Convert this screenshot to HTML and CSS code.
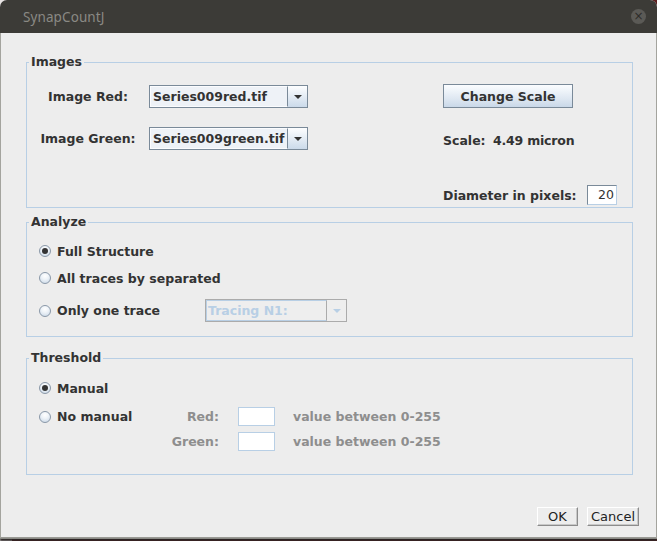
FILE: index.html
```html
<!DOCTYPE html>
<html>
<head>
<meta charset="utf-8">
<link rel="stylesheet" href="styles.css">
</head>
<body>
<div class="window">
  <div class="titlebar">
    <span class="title">SynapCountJ</span>
    <span class="close">×</span>
  </div>
  <div class="content">
    <fieldset class="group images">
      <legend>Images</legend>
      <div class="img-row r1">
        <span class="img-label">Image Red:</span>
        <div class="combo"><span class="combo-text">Series009red.tif</span><span class="combo-arrow"><span class="tri"></span></span></div>
        <button class="scale-btn">Change Scale</button>
      </div>
      <div class="img-row r2">
        <span class="img-label">Image Green:</span>
        <div class="combo"><span class="combo-text">Series009green.tif</span><span class="combo-arrow"><span class="tri"></span></span></div>
        <div class="scale-info"><span class="scale-key">Scale:</span><span class="scale-val">4.49 micron</span></div>
      </div>
      <div class="img-row r3">
        <span class="diam-label">Diameter in pixels:</span>
        <span class="diam-input">20</span>
      </div>
    </fieldset>

    <fieldset class="group analyze">
      <legend>Analyze</legend>
      <div class="radio-row a1">
        <span class="radio on"></span><span class="radio-label">Full Structure</span>
      </div>
      <div class="radio-row a2">
        <span class="radio"></span><span class="radio-label">All traces by separated</span>
      </div>
      <div class="radio-row a3">
        <span class="radio"></span><span class="radio-label wide">Only one trace</span>
        <div class="combo disabled"><span class="combo-text">Tracing N1:</span><span class="combo-arrow"><span class="tri"></span></span></div>
      </div>
    </fieldset>

    <fieldset class="group threshold">
      <legend>Threshold</legend>
      <div class="radio-row t1">
        <span class="radio on"></span><span class="radio-label">Manual</span>
      </div>
      <div class="radio-row t2">
        <span class="radio"></span><span class="radio-label tlabel">No manual</span>
        <span class="val-label">Red:</span>
        <span class="val-input"></span>
        <span class="val-hint">value between 0-255</span>
      </div>
      <div class="radio-row t3">
        <span class="val-spacer"></span>
        <span class="val-label">Green:</span>
        <span class="val-input"></span>
        <span class="val-hint">value between 0-255</span>
      </div>
    </fieldset>

    <div class="buttons">
      <button class="btn">OK</button>
      <button class="btn">Cancel</button>
    </div>
  </div>
</div>
</body>
</html>
```

FILE: styles.css
```css
html, body {
  margin: 0;
  padding: 0;
}
body {
  width: 657px;
  height: 541px;
  overflow: hidden;
  background: linear-gradient(90deg, #e8e4e4 0, #e8e4e4 12px, #5a1f1f 12px);
}
.window {
  width: 657px;
  height: 538px;
  background: #ededed;
  border-radius: 7px 7px 0 0;
  overflow: hidden;
  display: flex;
  flex-direction: column;
  box-shadow: 0 1px 0 #8a8a85, 0 3px 2px #2b2424;
}
.titlebar {
  height: 33px;
  flex: none;
  background: #3c3b37;
  display: flex;
  align-items: center;
  justify-content: space-between;
  padding: 0 11px 0 23px;
}
.title {
  font-family: "Noto Sans", "Open Sans", sans-serif;
  font-size: 13.5px;
  color: #8a8984;
  letter-spacing: 0.1px;
}
.close {
  width: 15px;
  height: 15px;
  border-radius: 50%;
  background: #5b5a56;
  color: #2d2c29;
  font-family: "DejaVu Sans", sans-serif;
  font-size: 12px;
  line-height: 15px;
  text-align: center;
}
.content {
  flex: 1;
  padding: 21px 0 0 26px;
  box-shadow: inset 1px 0 #a4a49e, inset -1px 0 #a4a49e, inset 0 -1px #9a9a95;
  font-family: "DejaVu Sans", sans-serif;
  font-weight: bold;
  font-size: 12.5px;
  color: #333333;
}
.group {
  margin: 0 24px 0 0;
  padding: 0;
  border: 1px solid #b8cfe5;
  min-width: 0;
}
.group legend {
  margin-left: 2px;
  padding: 0 2px;
  line-height: 16px;
  font-size: 12.5px;
  font-weight: bold;
  color: #333;
}
/* Images */
.images {
  padding: 14px 0 2px 0;
}
.img-row {
  display: flex;
  align-items: center;
}
.img-label {
  width: 102px;
  margin-left: 10px;
  margin-right: 10px;
  text-align: center;
  white-space: nowrap;
}
.r2 { margin-top: 19px; }
.r3 { margin-top: 35px; height: 20px; }
.combo {
  width: 159px;
  height: 23px;
  box-sizing: border-box;
  border: 1px solid #7a8a99;
  display: flex;
  background: #eef2f7;
  flex: none;
}
.combo-text {
  flex: 1;
  padding-left: 2px;
  line-height: 19px;
  border: 1px solid #fbfcfe;
  border-right: 1px solid #7a8a99;
  white-space: nowrap;
  overflow: hidden;
}
.combo-arrow {
  width: 19px;
  flex: none;
  background: linear-gradient(#fdfeff, #cbdaea);
  display: flex;
  align-items: center;
  justify-content: center;
}
.tri {
  width: 0;
  height: 0;
  border-left: 4px solid transparent;
  border-right: 4px solid transparent;
  border-top: 4px solid #333;
  margin-top: 1px;
}
.scale-btn {
  margin-left: 135px;
  width: 130px;
  height: 24px;
  box-sizing: border-box;
  border: 1px solid #7a8a99;
  background: linear-gradient(#fbfdff, #dfe8f2 60%, #c9d8e8);
  font-family: "DejaVu Sans", sans-serif;
  font-weight: bold;
  font-size: 12.5px;
  color: #333;
  padding: 0;
}
.scale-info {
  margin-left: 135px;
  display: flex;
  align-items: baseline;
  margin-top: 3px;
}
.scale-key {
  width: 50px;
}
.scale-val {
  font-size: 12.5px;
  letter-spacing: -0.2px;
}
.diam-label {
  margin-left: 416px;
  width: 131px;
  white-space: nowrap;
}
.diam-input {
  margin-left: 13px;
  width: 30px;
  height: 20px;
  box-sizing: border-box;
  background: #fff;
  border: 1px solid #7a8a99;
  border-right-color: #b8cfe5;
  border-bottom-color: #b8cfe5;
  font-weight: normal;
  text-align: right;
  padding-right: 2px;
  line-height: 18px;
  color: #333;
}
/* Radios */
.radio-row {
  display: flex;
  align-items: center;
  padding-left: 12px;
  white-space: nowrap;
}
.radio {
  width: 12px;
  height: 12px;
  box-sizing: border-box;
  border-radius: 50%;
  border: 1px solid #8a98a8;
  background: radial-gradient(circle at 50% 30%, #ffffff 0, #eef3f8 40%, #c6d5e5 100%);
  position: relative;
  margin-right: 6px;
  flex: none;
}
.radio.on::after {
  content: "";
  position: absolute;
  left: 2px;
  top: 2px;
  width: 6px;
  height: 6px;
  border-radius: 50%;
  background: #333;
}
.analyze {
  margin-top: 6px;
  padding: 10px 0 14px 0;
}
.a1, .a2 { height: 22px; }
.a2 { margin-top: 5px; }
.a3 { height: 23px; margin-top: 10px; }
.radio-label.wide { width: 148px; }
.combo.disabled {
  width: 142px;
  border-color: #ababab;
  background: #eeeeee;
  color: #b8cfe5;
}
.combo.disabled .combo-text {
  border: 1px solid #b8cfe5;
  border-right: 1px solid #ababab;
  padding-left: 1px;
}
.combo.disabled .combo-arrow {
  background: #eeeeee;
}
.combo.disabled .tri {
  border-top-color: #b8cfe5;
}
.threshold {
  margin-top: 13px;
  padding: 11px 0 23px 0;
}
.t1 { height: 22px; }
.t2 { height: 19px; margin-top: 8px; }
.t3 { height: 19px; margin-top: 6px; }
.tlabel { width: 93px; }
.val-spacer { width: 111px; flex: none; }
.val-label {
  width: 69px;
  flex: none;
  text-align: right;
  color: #8e8e8e;
}
.val-input {
  margin-left: 19px;
  width: 37px;
  height: 19px;
  flex: none;
  box-sizing: border-box;
  background: #fff;
  border: 1px solid #b8cfe5;
}
.val-hint {
  margin-left: 18px;
  color: #8e8e8e;
}
/* Buttons */
.buttons {
  display: flex;
  justify-content: flex-end;
  gap: 9px;
  margin-top: 32px;
  padding-right: 18px;
}
.btn {
  height: 19px;
  box-sizing: border-box;
  padding: 0 6px;
  background: #ededed;
  border: 1px solid;
  border-color: #ffffff #8c8c8c #8c8c8c #ffffff;
  box-shadow: inset -1px -1px 0 #c8c8c8;
  font-family: "DejaVu Sans", sans-serif;
  font-size: 13px;
  font-weight: normal;
  color: #222;
  line-height: 16px;
}
.btn:first-child { width: 41px; }
.btn:last-child { width: 52px; padding: 0 2px; }
```
